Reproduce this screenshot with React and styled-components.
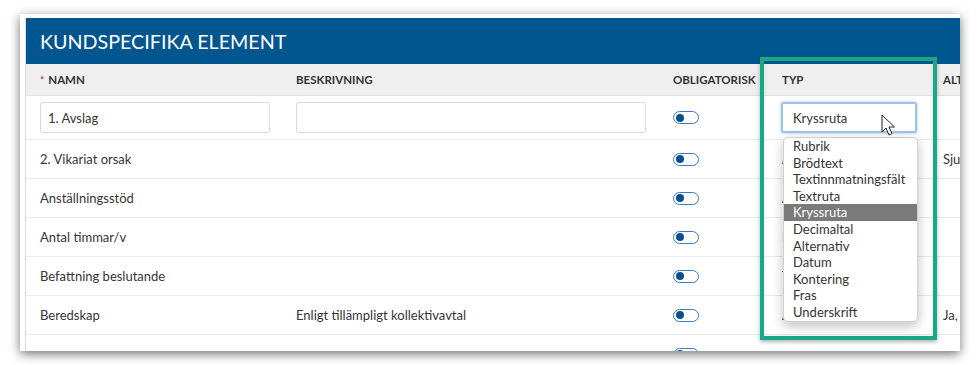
import React from 'react';
import styled, { createGlobalStyle } from 'styled-components';

const GlobalStyle = createGlobalStyle`
    body {
        margin: 0;
        background: #ffffff;
        font-family: Lato, "Open Sans", sans-serif;
        color: #333333;
    }
`

const Page = styled.div`
    padding: 14px 20px 0 20px;
    width: 980px;
    height: 365px;
    box-sizing: border-box;
`

const Frame = styled.div`
    position: relative;
    width: 940px;
    height: 337px;
    padding: 4px 0 0 5px;
    box-sizing: border-box;
    background: #ffffff;
    overflow: hidden;
    box-shadow: 0 3px 10px rgba(0, 0, 0, 0.55);
`

const Panel = styled.div`
    width: 1000px;
    border-left: 1px solid #dcdcdc;
    background: #ffffff;
`

const Header = styled.div`
    height: 46px;
    display: flex;
    align-items: center;
    padding-left: 14px;
    background: #02568f;
    color: #ffffff;
    font-size: 19.7px;
`

const Row = styled.div`
    display: grid;
    grid-template-columns: 256px 377px 109px 161px 1fr;
    align-items: center;
    height: ${p => p.$h}px;
    box-sizing: border-box;
    background: ${p => p.$head ? '#efefef' : '#ffffff'};
    border-bottom: 1px solid ${p => p.$head ? '#e2e2e2' : '#e8ebee'};
    font-size: ${p => p.$head ? '11.5px' : '13px'};
    font-weight: ${p => p.$head ? 700 : 400};
    color: ${p => p.$head ? '#343434' : '#353535'};
`

const Cell = styled.div`
    position: relative;
    padding-left: 14px;
    white-space: nowrap;
`

const Required = styled.span`
    color: #c0392b;
    font-size: 10px;
    margin-right: 4px;
    position: relative;
    top: -1px;
`

const Input = styled.div`
    width: ${p => p.$w}px;
    height: 31px;
    box-sizing: border-box;
    border: 1px solid #d6dade;
    border-radius: 3px;
    padding-left: 7px;
    display: flex;
    align-items: center;
    background: #ffffff;
`

const Select = styled(Input)`
    margin-left: -1px;
    border: 2px solid #9fc3e4;
    box-shadow: 0 0 2px 1px rgba(120, 170, 220, 0.35);
    padding-left: 10px;
`

const Toggle = styled.div`
    width: 26px;
    height: 13px;
    box-sizing: border-box;
    border: 1.5px solid #3d7ab8;
    border-radius: 7px;
    display: flex;
    align-items: center;
    padding-left: 2px;

    &::before {
        content: '';
        width: 8px;
        height: 8px;
        border-radius: 50%;
        background: #0a4e92;
    }
`

const Highlight = styled.div`
    position: absolute;
    left: 740px;
    top: 43px;
    width: 177px;
    height: 283px;
    box-sizing: border-box;
    border: 4px solid #16a985;
    box-shadow: 0 2px 4px rgba(0, 0, 0, 0.3), inset 0 0 4px rgba(0, 0, 0, 0.08);
    pointer-events: none;
`

const Dropdown = styled.ul`
    position: absolute;
    left: 15px;
    top: 35px;
    width: 133px;
    margin: 0;
    padding: 0;
    list-style: none;
    background: #ffffff;
    border: 1px solid #d0d0d0;
    border-radius: 5px;
    box-shadow: 0 4px 12px rgba(0, 0, 0, 0.25);
    overflow: hidden;
    z-index: 2;
`

const Option = styled.li`
    height: 16.6px;
    line-height: 16.6px;
    padding-left: 9px;
    font-size: 13px;
    color: ${p => p.$active ? '#ffffff' : '#333333'};
    background: ${p => p.$active ? '#7a7a7a' : 'transparent'};
`

const Cursor = styled.svg`
    position: absolute;
    left: 113px;
    top: 12px;
    z-index: 3;
`

const options = ['Rubrik', 'Brödtext', 'Textinnmatningsfält', 'Textruta', 'Kryssruta', 'Decimaltal',
    'Alternativ', 'Datum', 'Kontering', 'Fras', 'Underskrift'];

const rows = [
    { name: '2. Vikariat orsak', desc: '', typ: 'Alternativ', alt: 'Sjukdom' },
    { name: 'Anställningsstöd', desc: '', typ: 'Alternativ', alt: '' },
    { name: 'Antal timmar/v', desc: '', typ: 'Decimaltal', alt: '' },
    { name: 'Befattning beslutande', desc: '', typ: 'Textruta', alt: '' },
    { name: 'Beredskap', desc: 'Enligt tillämpligt kollektivavtal', typ: 'Alternativ', alt: 'Ja, Nej' },
    { name: '', desc: '', typ: '', alt: '' },
];

const App = () => (
    <Page>
        <GlobalStyle/>
        <Frame>
            <Panel>
                <Header>KUNDSPECIFIKA ELEMENT</Header>
                <Row $head $h={32}>
                    <Cell><Required>*</Required>NAMN</Cell>
                    <Cell>BESKRIVNING</Cell>
                    <Cell>OBLIGATORISK</Cell>
                    <Cell>TYP</Cell>
                    <Cell>ALTERNATIV</Cell>
                </Row>
                <Row $h={44}>
                    <Cell><Input $w={230}>1. Avslag</Input></Cell>
                    <Cell><Input $w={350}/></Cell>
                    <Cell><Toggle/></Cell>
                    <Cell>
                        <Select $w={136}>Kryssruta</Select>
                        <Dropdown>
                            {options.map(o => <Option key={o} $active={o === 'Kryssruta'}>{o}</Option>)}
                        </Dropdown>
                        <Cursor width="16" height="24" viewBox="0 0 16 24">
                            <path d="M1 1 L1 18 L5 14 L8 21 L11 19.6 L8 13 L13.5 13 Z"
                                fill="#ffffff" stroke="#222222" strokeWidth="1" strokeLinejoin="round"/>
                        </Cursor>
                    </Cell>
                    <Cell/>
                </Row>
                {rows.map((r, i) => (
                    <Row key={i} $h={39}>
                        <Cell>{r.name}</Cell>
                        <Cell>{r.desc}</Cell>
                        <Cell><Toggle/></Cell>
                        <Cell>{r.typ}</Cell>
                        <Cell>{r.alt}</Cell>
                    </Row>
                ))}
            </Panel>
            <Highlight/>
        </Frame>
    </Page>
)

export default App;
